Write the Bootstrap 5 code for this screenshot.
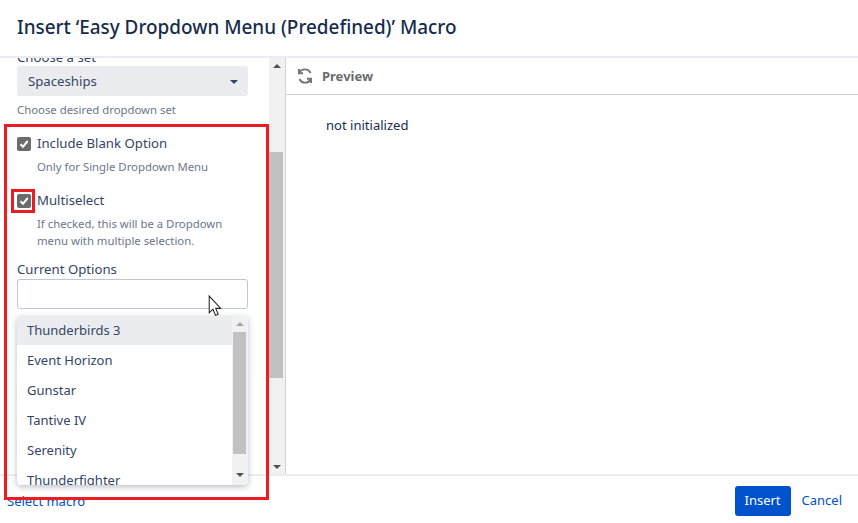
<!DOCTYPE html>
<html><head><meta charset="utf-8">
<link href="https://cdn.jsdelivr.net/npm/bootstrap@5.3.0/dist/css/bootstrap.min.css" rel="stylesheet">
<style>
html,body{margin:0;height:523px;overflow:hidden;background:#fff}
body{font-family:"Noto Sans","Open Sans",sans-serif;font-size:13.2px;color:#172b4d;position:relative;width:858px}
.head{height:58px;border-bottom:2px solid #ebecf0;padding-left:17px;display:flex;align-items:center}
.head h1{font-size:18.9px;font-weight:500;margin:0;color:#172b4d;position:relative;top:-1px}
.mainrow{height:416px;display:flex}
.leftp{width:285px;position:relative;overflow:hidden;flex:none}
.formcol{width:269px;padding:0 21px 0 17px;height:100%;overflow:hidden}
.cliplabel{height:8px;line-height:0;overflow:visible;position:relative;margin:0}
.cliplabel span{position:relative;top:-1px}
.selectbox{height:30px;background:#ebecf0;border-radius:3px;display:flex;align-items:center;justify-content:space-between;padding:2px 10px 0 11px}
.caret1{border-left:4px solid transparent;border-right:4px solid transparent;border-top:4px solid #344563}
.hint{font-size:11.35px;color:#6b778c;line-height:16px}
.chk{width:14px;height:14px;border-radius:2px;background:#6b6b6b;flex:none;display:flex;align-items:center;justify-content:center}
.chkrow{display:flex;gap:6px;align-items:center;height:20px}
.indent{padding-left:20px}
.lab{color:#344563}
.txt{height:30px;border:1px solid #c1c7d0;border-radius:3px;background:#fff}
.sb{position:absolute;width:16px;background:#f1f1f1;top:0;bottom:0;left:269px}
.sb .thumb{position:absolute;left:0;right:2px;top:94px;height:226px;background:#c1c1c1}
.tri-u,.tri-d{position:absolute;left:4px;border-left:4px solid transparent;border-right:4px solid transparent}
.tri-u{top:6px;border-bottom:4px solid #505050}
.tri-d{bottom:5px;border-top:4px solid #505050}
.rightp{flex:1;border-left:1px solid #d4d4d4}
.prevh{height:37px;border-bottom:1px solid #d4d4d4;display:flex;align-items:center;gap:9px;padding-left:11px;font-weight:700;font-size:13px;color:#6b6b6b}
.prevh span{position:relative;top:1px}
.prevb{padding:21px 40px;line-height:18px;color:#172b4d;font-size:13.05px}
.foot{height:47px;border-top:2px solid #ebecf0;display:flex;align-items:center;justify-content:space-between;padding:0 16px 0 7px;position:relative}
.foot a{color:#0052cc;text-decoration:none;font-size:13px}
.btn-ins{background:#0052cc;color:#fff;height:30px;width:56px;border-radius:3px;border:0;padding:0;font-size:13px}
.acts{display:flex;align-items:center;gap:11px;margin-top:5px}
.sel{margin-top:6px}
.menu{position:absolute;left:17px;top:316px;width:231px;height:169px;background:#fff;border-radius:4px;box-shadow:0 2px 6px rgba(9,30,66,.28);overflow:hidden;z-index:3;padding-top:0}
.menu ul{list-style:none;margin:0;padding:0;width:215px;position:absolute;left:0;top:-1px}
.menu li{height:30px;line-height:30px;padding-left:10px;color:#344563;font-size:13px}
.menu li.on{background:#ebecf0;margin-top:1px;height:29px;line-height:28px}
.menu .msb{position:absolute;right:0;top:0;bottom:0;width:16px;background:#f1f1f1}
.menu .msb i{position:absolute;left:1px;right:2px;top:16px;height:122px;background:#c1c1c1}
.msb .up{position:absolute;left:4px;top:6px;border-left:4px solid transparent;border-right:4px solid transparent;border-bottom:4px solid #a3a3a3}
.msb .dn{position:absolute;left:4px;bottom:8px;border-left:4px solid transparent;border-right:4px solid transparent;border-top:4px solid #505050}
.redbox{position:absolute;border:3px solid #ed1c24;z-index:5;pointer-events:none}
.r1{left:4px;top:124px;width:265px;height:376px}
.r2{left:11px;top:189px;width:24px;height:24px}
.cursor{position:absolute;left:208px;top:295px;z-index:6}
</style></head><body>
<div class="head"><h1>Insert ‘Easy Dropdown Menu (Predefined)’ Macro</h1></div>
<div class="mainrow">
 <div class="leftp">
  <div class="formcol">
   <p class="cliplabel lab"><span>Choose a set</span></p>
   <div class="selectbox lab"><span>Spaceships</span><span class="caret1"></span></div>
   <div class="hint" style="margin-top:6px">Choose desired dropdown set</div>
   <div class="chkrow" style="margin-top:16px"><span class="chk"><svg width="10" height="10" viewBox="0 0 10 10"><path d="M1.5 5.2 4 7.8 8.7 2" fill="none" stroke="#fff" stroke-width="2"/></svg></span><span class="lab">Include Blank Option</span></div>
   <div class="hint indent" style="margin-top:5px">Only for Single Dropdown Menu</div>
   <div class="chkrow" style="margin-top:16px"><span class="chk"><svg width="10" height="10" viewBox="0 0 10 10"><path d="M1.5 5.2 4 7.8 8.7 2" fill="none" stroke="#fff" stroke-width="2"/></svg></span><span class="lab">Multiselect</span></div>
   <div class="hint indent" style="margin-top:4px;line-height:17px">If checked, this will be a Dropdown menu with multiple selection.</div>
   <div class="lab" style="margin-top:11px;line-height:18px;height:19px">Current Options</div>
   <div class="txt"></div>
  </div>
  <div class="sb"><span class="tri-u"></span><span class="thumb"></span><span class="tri-d"></span></div>
 </div>
 <div class="rightp">
  <div class="prevh"><svg width="16" height="16" viewBox="0 0 16 16" fill="none" stroke="#737373" stroke-width="1.9"><path d="M2 1v4.2h4"/><path d="M2.2 5A6.2 6.2 0 0 1 13.5 5"/><path d="M14 15v-4.2h-4"/><path d="M13.8 11A6.2 6.2 0 0 1 2.5 11"/></svg><span>Preview</span></div>
  <div class="prevb">not initialized</div>
 </div>
</div>
<div class="foot"><a href="#" class="sel">Select macro</a><div class="acts"><button class="btn-ins">Insert</button><a href="#">Cancel</a></div></div>
<div class="menu"><ul><li class="on">Thunderbirds 3</li><li>Event Horizon</li><li>Gunstar</li><li>Tantive IV</li><li>Serenity</li><li>Thunderfighter</li></ul><div class="msb"><span class="up"></span><i></i><span class="dn"></span></div></div>
<div class="redbox r1"></div><div class="redbox r2"></div>
<svg class="cursor" width="15" height="23" viewBox="0 0 14 22"><path d="M1 1V17L4.6 13.6 7 19.5 9.6 18.4 7.2 12.8H12Z" fill="#fff" stroke="#222" stroke-width="1"/></svg>
<script src="https://cdn.jsdelivr.net/npm/bootstrap@5.3.0/dist/js/bootstrap.bundle.min.js"></script>
</body></html>
